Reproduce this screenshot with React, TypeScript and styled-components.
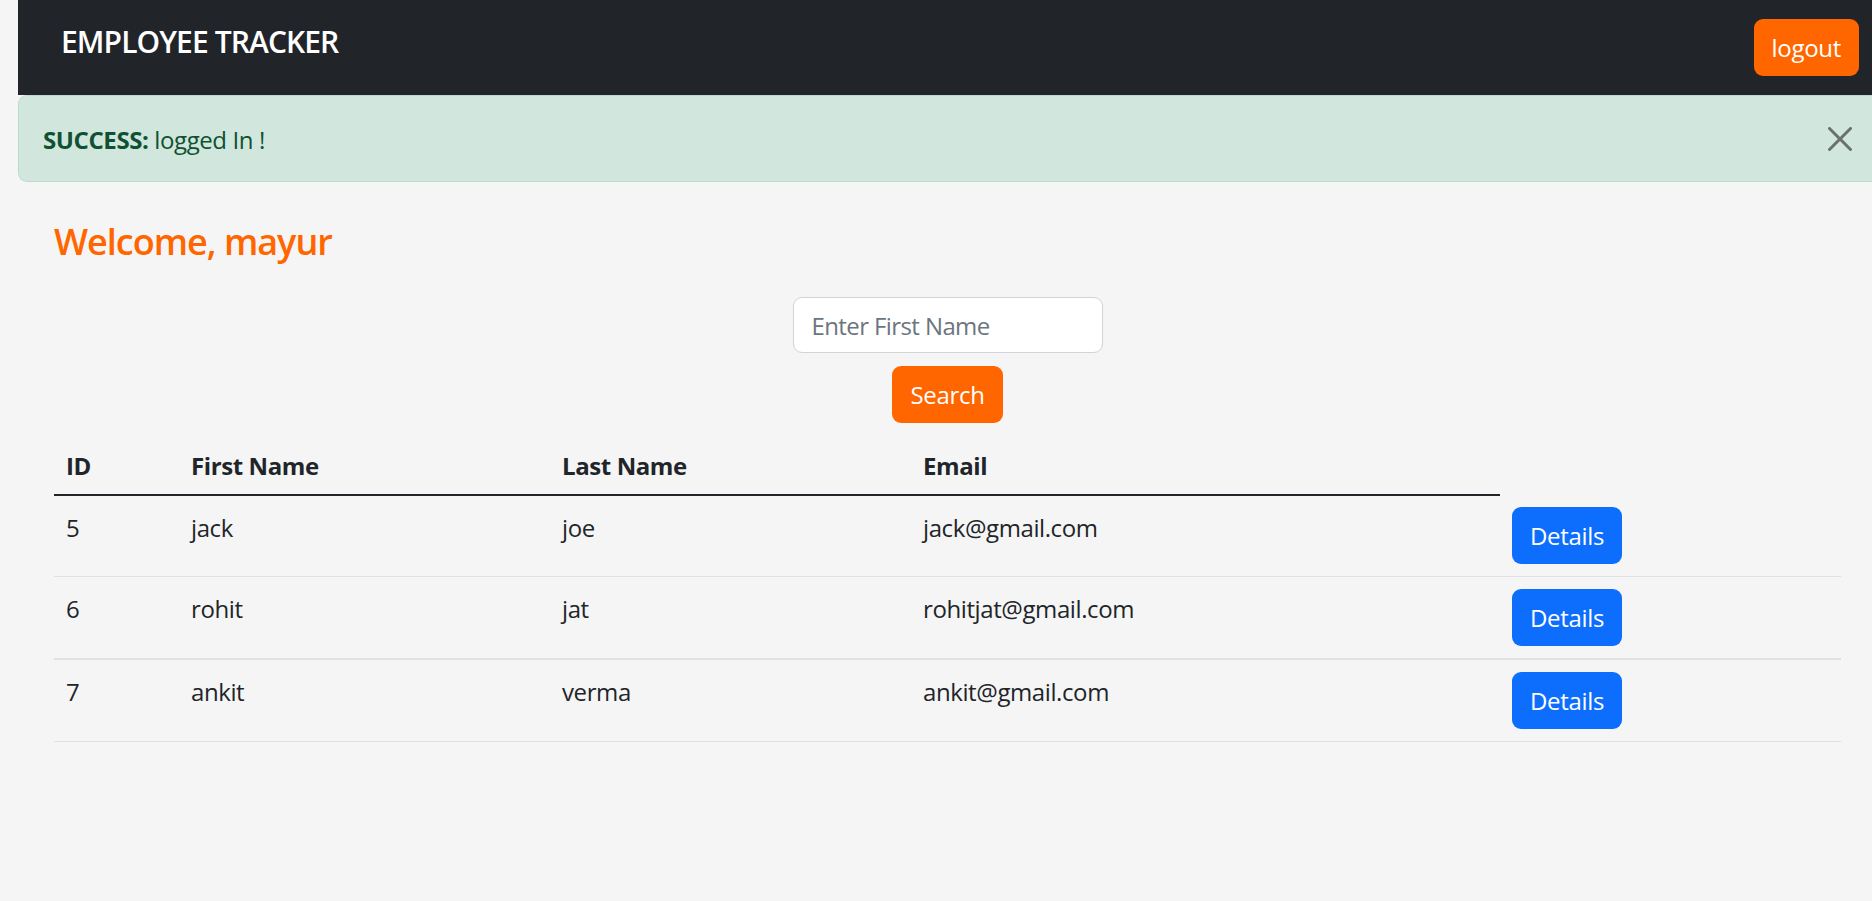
import React from "react";
import styled, { createGlobalStyle } from "styled-components";

const GlobalStyle = createGlobalStyle`
  html, body {
    margin: 0;
    padding: 0;
    background: #f5f5f5;
  }
  body {
    font-family: "Open Sans", "Noto Sans", "Liberation Sans", sans-serif;
    color: #212529;
    font-size: 24px;
    line-height: 1.5;
    letter-spacing: -0.4px;
  }
  * { box-sizing: border-box; }
`;

const Page = styled.div`
  padding-left: 18px;
  min-height: 901px;
  overflow: hidden;
`;

const NavBar = styled.header`
  display: flex;
  justify-content: space-between;
  align-items: flex-start;
  height: 95px;
  padding: 19px 13px 0 43px;
  background: #212529;
`;

const Brand = styled.div`
  color: #ffffff;
  font-size: 30px;
  line-height: 45px;
  font-weight: 600;
  letter-spacing: -0.9px;
`;

const Button = styled.button<{ $tone: "orange" | "blue" }>`
  font-family: inherit;
  font-size: 24px;
  line-height: 36px;
  letter-spacing: -0.3px;
  height: 57px;
  padding: 0 18px;
  border: 0;
  border-radius: 9px;
  color: #ffffff;
  background: ${(p) => (p.$tone === "orange" ? "#ff6600" : "#0d6efd")};
  cursor: pointer;
`;

const Alert = styled.div`
  display: flex;
  align-items: center;
  justify-content: space-between;
  height: 87px;
  padding: 0 20px 0 24px;
  background: #d1e7dd;
  color: #0f5132;
  border: 1px solid #badbcc;
  border-right: 0;
  border-radius: 9px 0 0 9px;
  font-size: 24px;
  line-height: 36px;
`;

const AlertText = styled.div`
  padding-top: 2px;
  strong {
    font-weight: 700;
  }
`;

const CloseButton = styled.button`
  width: 24px;
  height: 24px;
  padding: 0;
  border: 0;
  background: transparent;
  opacity: 0.5;
  display: flex;
  cursor: pointer;
`;

const Main = styled.main`
  padding: 38px 31px 40px 36px;
`;

const Welcome = styled.h2`
  margin: 0;
  color: #ff6600;
  font-size: 36px;
  line-height: 43px;
  font-weight: 600;
  letter-spacing: -1px;
`;

const SearchForm = styled.form`
  display: flex;
  flex-direction: column;
  align-items: center;
  gap: 13px;
  margin-top: 34px;
`;

const SearchInput = styled.input`
  width: 310px;
  height: 56px;
  padding: 0 18px;
  font-family: inherit;
  font-size: 24px;
  letter-spacing: -0.6px;
  color: #212529;
  background: #ffffff;
  border: 1px solid #ced4da;
  border-radius: 9px;
  outline: none;
  &::placeholder {
    color: #6c757d;
  }
`;

const Table = styled.table`
  width: 100%;
  margin-top: 11px;
  border-collapse: collapse;
  table-layout: fixed;
`;

const HeadCell = styled.th`
  text-align: left;
  font-weight: 700;
  padding: 14px 12px 10px;
  line-height: 36px;
  border-bottom: 2px solid #212529;
`;

const Row = styled.tr<{ $thick?: boolean }>`
  td {
    border-bottom: ${(p) => (p.$thick ? "2px" : "1px")} solid #dee2e6;
  }
`;

const Cell = styled.td`
  padding: 14px 12px 10px;
  line-height: 36px;
  vertical-align: top;
`;

const ButtonCell = styled(Cell)`
  padding: 12px;
`;

const employees = [
  { id: 5, first: "jack", last: "joe", email: "jack@gmail.com" },
  { id: 6, first: "rohit", last: "jat", email: "rohitjat@gmail.com" },
  { id: 7, first: "ankit", last: "verma", email: "ankit@gmail.com" },
];

const CloseIcon = () => (
  <svg width="24" height="24" viewBox="0 0 16 16" fill="#000">
    <path d="M.293.293a1 1 0 0 1 1.414 0L8 6.586 14.293.293a1 1 0 1 1 1.414 1.414L9.414 8l6.293 6.293a1 1 0 0 1-1.414 1.414L8 9.414l-6.293 6.293a1 1 0 0 1-1.414-1.414L6.586 8 .293 1.707a1 1 0 0 1 0-1.414z" />
  </svg>
);

export default function App() {
  return (
    <Page>
      <GlobalStyle />
      <NavBar>
        <Brand>EMPLOYEE TRACKER</Brand>
        <Button $tone="orange">logout</Button>
      </NavBar>
      <Alert>
        <AlertText>
          <strong>SUCCESS:</strong> logged In !
        </AlertText>
        <CloseButton aria-label="Close">
          <CloseIcon />
        </CloseButton>
      </Alert>
      <Main>
        <Welcome>Welcome, mayur</Welcome>
        <SearchForm onSubmit={(e) => e.preventDefault()}>
          <SearchInput placeholder="Enter First Name" />
          <Button $tone="orange" type="submit">
            Search
          </Button>
        </SearchForm>
        <Table>
          <colgroup>
            <col style={{ width: 125 }} />
            <col style={{ width: 371 }} />
            <col style={{ width: 361 }} />
            <col style={{ width: 589 }} />
            <col />
          </colgroup>
          <thead>
            <tr>
              <HeadCell>ID</HeadCell>
              <HeadCell>First Name</HeadCell>
              <HeadCell>Last Name</HeadCell>
              <HeadCell>Email</HeadCell>
            </tr>
          </thead>
          <tbody>
            {employees.map((e, i) => (
              <Row key={e.id} $thick={i === 1}>
                <Cell>{e.id}</Cell>
                <Cell>{e.first}</Cell>
                <Cell>{e.last}</Cell>
                <Cell>{e.email}</Cell>
                <ButtonCell>
                  <Button $tone="blue">Details</Button>
                </ButtonCell>
              </Row>
            ))}
          </tbody>
        </Table>
      </Main>
    </Page>
  );
}
